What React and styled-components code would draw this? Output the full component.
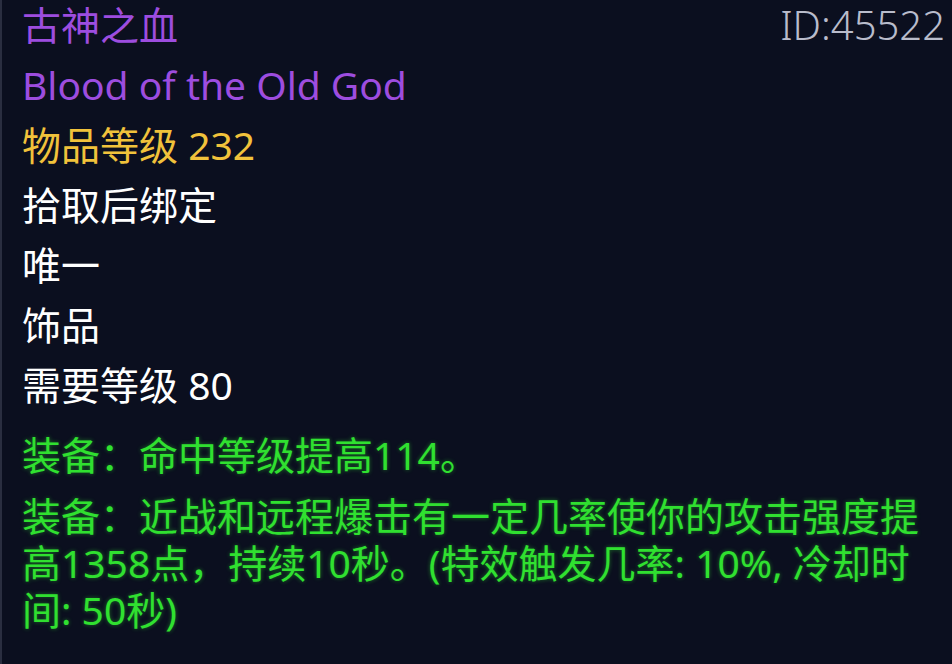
import React from "react";
import styled, { createGlobalStyle } from "styled-components";

const GlobalStyle = createGlobalStyle`
  html, body {
    margin: 0;
    padding: 0;
    background: #0b0f1f;
  }
  body {
    font-family: "Noto Sans", "Noto Sans CJK SC", sans-serif;
  }
`;

const colors = {
  epic: "#9d4ddf",
  level: "#f1c23b",
  plain: "#ffffff",
  equip: "#30e030",
};

const Tooltip = styled.div`
  box-sizing: border-box;
  width: 952px;
  height: 664px;
  padding: 1px 7px 0 20px;
  background: #0b0f1f;
  border-left: 2px solid #2a2e40;
  overflow: hidden;
`;

const Header = styled.div`
  display: flex;
  justify-content: space-between;
  align-items: flex-start;
`;

const Line = styled.div`
  font-size: 39px;
  line-height: 47px;
  margin-bottom: 13px;
  color: ${(p) => colors[p.$tone] || colors.plain};
  white-space: nowrap;
`;

const ItemId = styled.div`
  font-size: 40px;
  line-height: 47px;
  font-weight: 300;
  color: #b9bccb;
`;

const Effects = styled.div`
  margin-top: 23px;
`;

const Effect = styled.p`
  margin: 0 0 14px;
  font-size: 39px;
  line-height: 47px;
  color: ${colors.equip};
  text-shadow: 0 0 4px rgba(48, 230, 48, 0.45);
`;

const item = {
  id: 45522,
  name: "古神之血",
  nameEn: "Blood of the Old God",
  level: 232,
  lines: ["拾取后绑定", "唯一", "饰品", "需要等级 80"],
  effects: [
    ["装备：命中等级提高114。"],
    [
      "装备：近战和远程爆击有一定几率使你的攻击强度提",
      "高1358点，持续10秒。(特效触发几率: 10%, 冷却时",
      "间: 50秒)",
    ],
  ],
};

export default function App() {
  return (
    <>
      <GlobalStyle />
      <Tooltip>
        <Header>
          <Line $tone="epic">{item.name}</Line>
          <ItemId>ID:{item.id}</ItemId>
        </Header>
        <Line $tone="epic">{item.nameEn}</Line>
        <Line $tone="level">物品等级 {item.level}</Line>
        {item.lines.map((text) => (
          <Line key={text}>{text}</Line>
        ))}
        <Effects>
          {item.effects.map((rows, i) => (
            <Effect key={i}>
              {rows.map((row, j) => (
                <React.Fragment key={j}>
                  {j > 0 && <br />}
                  {row}
                </React.Fragment>
              ))}
            </Effect>
          ))}
        </Effects>
      </Tooltip>
    </>
  );
}
